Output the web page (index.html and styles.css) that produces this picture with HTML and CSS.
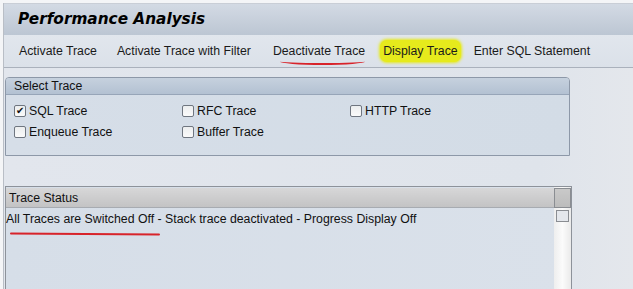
FILE: index.html
```html
<!DOCTYPE html>
<html lang="en">
<head>
  <meta charset="UTF-8" />
  <title>Performance Analysis</title>
  <link rel="stylesheet" href="styles.css">
</head>
<body>
  <div class="window">
    <div class="title-bar">
      <h1>Performance Analysis</h1>
    </div>
    <div class="toolbar">
      <span class="tool">Activate Trace</span>
      <span class="tool wide">Activate Trace with Filter</span>
      <span class="tool marked">Deactivate Trace</span>
      <span class="tool highlighted">Display Trace</span>
      <span class="tool">Enter SQL Statement</span>
    </div>

    <div class="content">
      <div class="group">
        <div class="group-head">Select Trace</div>
        <div class="group-body">
          <label class="check"><span class="box checked">&#10004;</span>SQL Trace</label>
          <label class="check"><span class="box"></span>RFC Trace</label>
          <label class="check"><span class="box"></span>HTTP Trace</label>
          <label class="check"><span class="box"></span>Enqueue Trace</label>
          <label class="check"><span class="box"></span>Buffer Trace</label>
        </div>
      </div>

      <div class="status">
        <div class="status-main">
          <div class="status-head">Trace Status</div>
          <div class="status-text"><span class="marked-line">All Traces are Switched Off</span> - Stack trace deactivated - Progress Display Off</div>
        </div>
        <div class="scrollbar">
          <div class="scroll-corner"></div>
          <div class="scroll-btn"></div>
        </div>
      </div>
    </div>
  </div>
</body>
</html>
```

FILE: styles.css
```css
* {
  box-sizing: border-box;
}
body {
  margin: 0;
  font-family: "Liberation Sans", sans-serif;
  font-size: 12.3px;
  color: #111;
  background: #f4f5f7;
}
.window {
  margin: 3px 0 0 3px;
  border-left: 1px solid #b9bec6;
  background: linear-gradient(90deg, #e2e6ed, #dfe4eb 85%, #e4e7ec);
  height: 286px;
  overflow: hidden;
}
.title-bar {
  height: 32px;
  background: linear-gradient(#d3dae4, #bcc6d3);
  border-top: 1px solid #c9ced6;
  display: flex;
  align-items: center;
}
h1 {
  margin: 0 0 1px 14px;
  font-family: "DejaVu Sans", sans-serif;
  font-size: 15.3px;
  font-style: italic;
  font-weight: bold;
  color: #000;
}
.toolbar {
  height: 33px;
  display: flex;
  align-items: center;
  padding-left: 15px;
  background: linear-gradient(#e1e6ed, #dbe1e9);
  border-bottom: 1px solid #aab1bc;
  white-space: nowrap;
  color: #1a1a1a;
}
.tool {
  flex-shrink: 0;
  margin-right: 20px;
  position: relative;
}
.tool.wide {
  margin-right: 22px;
}
.tool.marked {
  margin-right: 18px;
}
.tool.marked::after {
  content: "";
  position: absolute;
  left: 7px;
  right: 0;
  bottom: -7px;
  height: 5px;
  border-bottom: 2px solid #d8232a;
  border-radius: 0 0 50% 50%;
}
.tool.highlighted {
  background: #e6ea1c;
  border-radius: 7px;
  padding: 4px 3px;
  margin: 0 13px 0 -3px;
  box-shadow: 0 0 3px 1px #e6ea1c;
}
.content {
  padding: 9px 0 0 1px;
}
.group {
  width: 565px;
  border: 1px solid #8d98a8;
  border-radius: 4px 4px 0 0;
  background: linear-gradient(90deg, #d6dee8, #d3dce6);
}
.group-head {
  height: 17px;
  padding-left: 8px;
  line-height: 16px;
  background: linear-gradient(#c6d1de, #b3c1d2);
  border-bottom: 1px solid #97a5b8;
  border-radius: 3px 3px 0 0;
}
.group-body {
  height: 60px;
  padding: 5px 0 0 8px;
  display: grid;
  grid-template-columns: 168px 168px 1fr;
  grid-auto-rows: 21px;
}
.check:nth-child(4) {
  grid-column: 1;
}
.check {
  display: flex;
  align-items: center;
}
.box {
  width: 12px;
  height: 12px;
  border: 1px solid #6f7680;
  border-radius: 2px;
  background: linear-gradient(#eceeef, #fafafa);
  margin-right: 3px;
  font-size: 10px;
  line-height: 10px;
  text-align: center;
  color: #111;
}
.status {
  margin-top: 30px;
  width: 567px;
  height: 110px;
  border: 1px solid #8d929a;
  border-bottom: none;
  display: flex;
  background: linear-gradient(90deg, #d6dee8, #dae1ea);
}
.status-main {
  flex: 1;
}
.status-head {
  height: 20px;
  margin-top: 1px;
  padding-left: 3px;
  line-height: 20px;
  background: linear-gradient(#d7d7d8, #c3c3c4);
  border-bottom: 1px solid #a7abb1;
}
.status-text {
  padding-top: 4px;
  white-space: nowrap;
}
.marked-line {
  position: relative;
}
.marked-line::after {
  content: "";
  position: absolute;
  left: 4px;
  right: -6px;
  bottom: -9px;
  height: 2px;
  background: #d8232a;
  border-radius: 1px;
  transform: rotate(0.3deg);
}
.scrollbar {
  width: 17px;
  background: linear-gradient(90deg, #eeeeee, #fbfbfb, #eaeaea);
  display: flex;
  flex-direction: column;
  align-items: center;
}
.scroll-corner {
  margin-top: 1px;
  width: 17px;
  height: 20px;
  border: 1px solid #8a8d92;
  background: linear-gradient(#c9c9c9, #bcbcbc);
}
.scroll-btn {
  margin-top: 2px;
  width: 13px;
  height: 12px;
  border: 1px solid #8a8d92;
  background: #e4e7ec;
}
```
